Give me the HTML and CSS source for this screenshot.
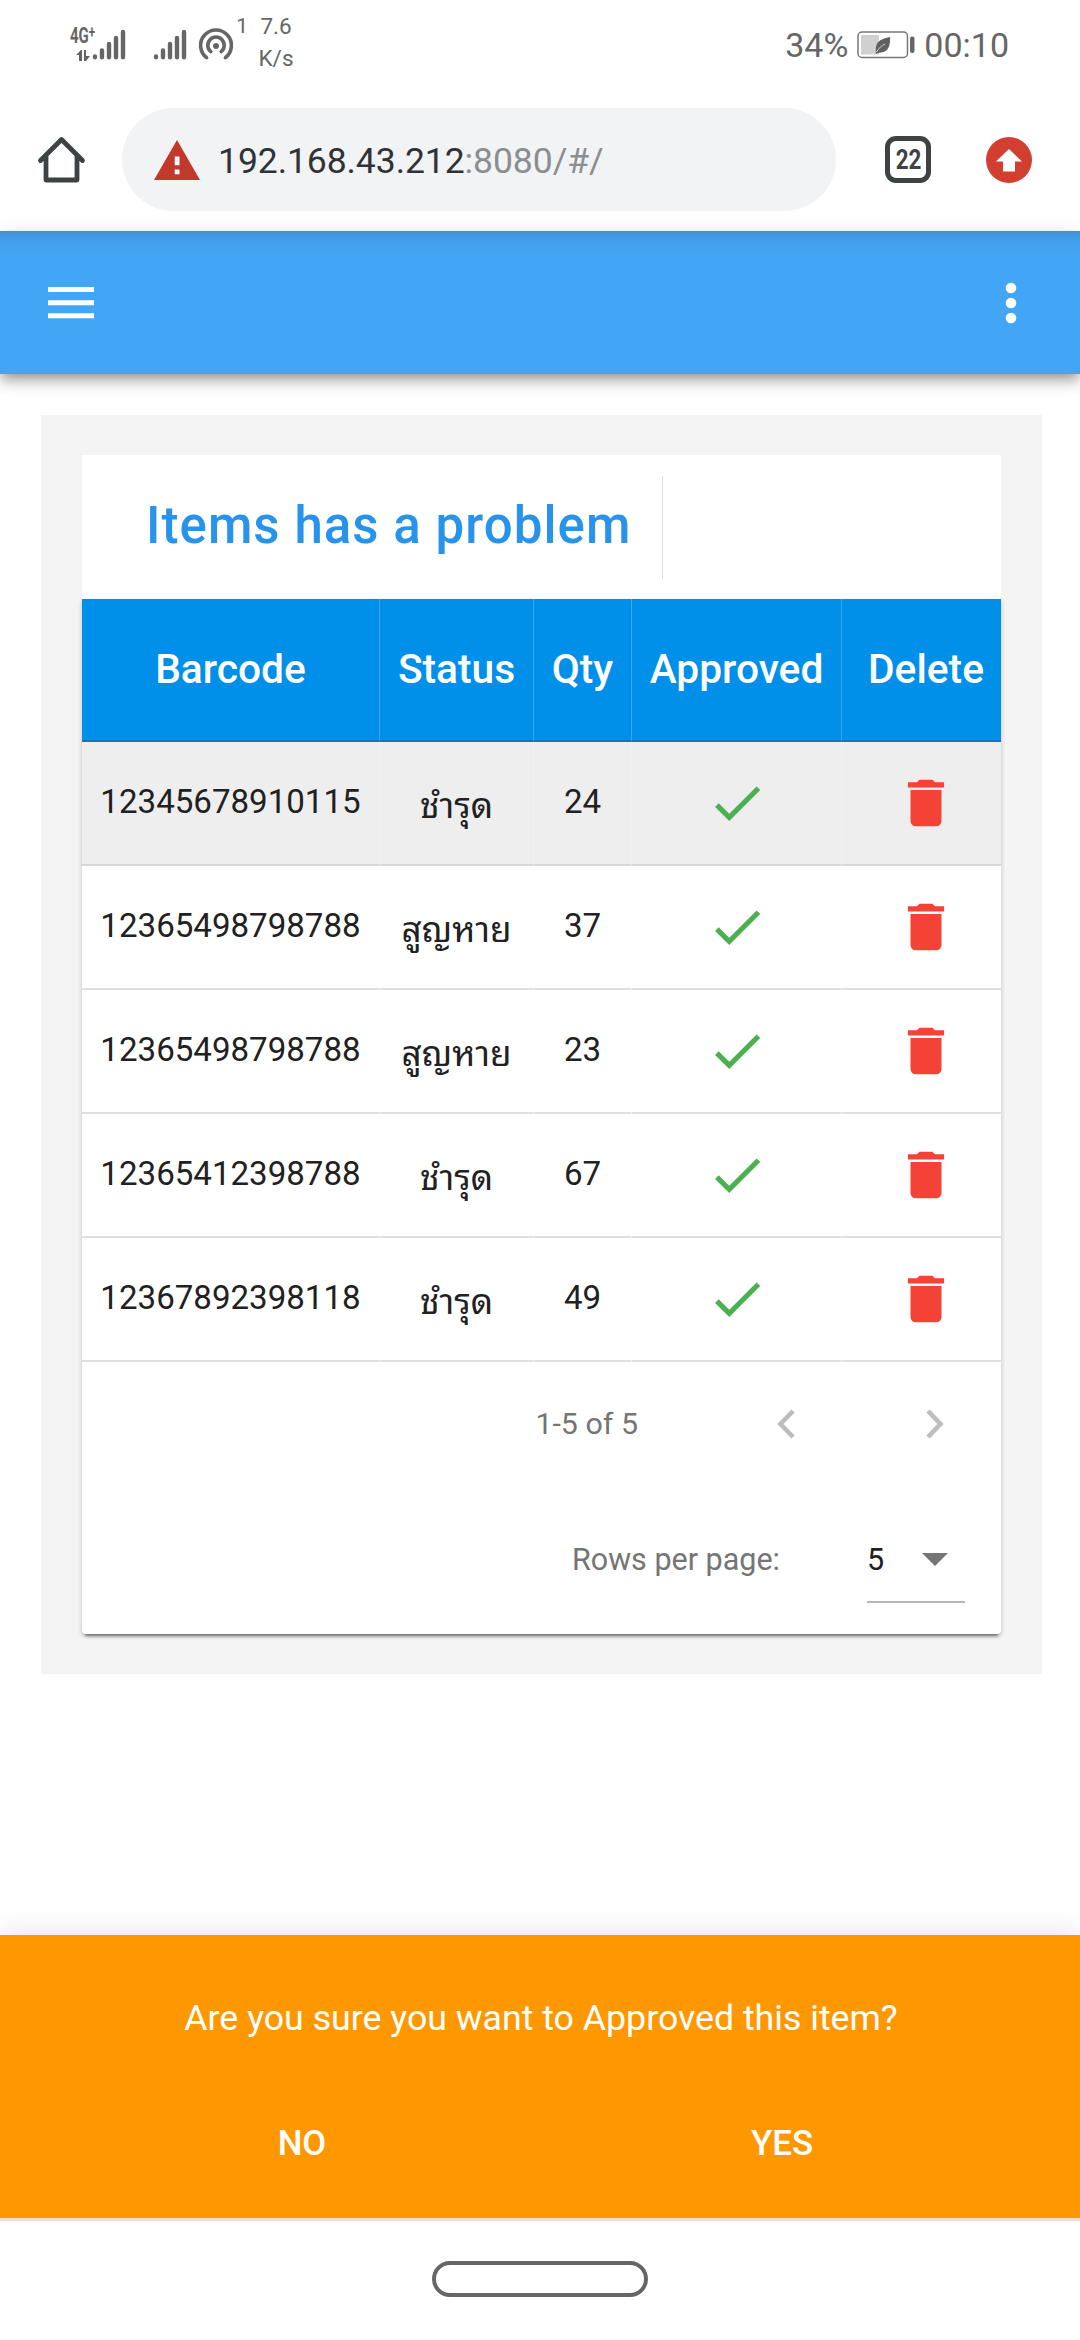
FILE: index.html
```html
<!DOCTYPE html>
<html lang="th">
<head>
<meta charset="utf-8">
<title>Items has a problem</title>
<link rel="stylesheet" href="styles.css">
</head>
<body>
<svg class="defs" aria-hidden="true">
  <symbol id="bars" viewBox="0 0 34 31">
    <g stroke="#666" stroke-width="4.4" stroke-linecap="round">
      <path d="M3 27.5v.8M10 21.5v6.8M17 15v13.3M24 9v19.3M31 3v25.3"/>
    </g>
  </symbol>
  <symbol id="check" viewBox="0 0 24 24"><path d="M21 7 9 19l-5.500-5.500 1.410-1.410L9 16.170 19.590 5.590z" fill="#4caf50"/></symbol>
  <symbol id="trash" viewBox="0 0 24 24"><path d="M19 4h-3.500l-1-1h-5l-1 1H5v2h14M6 19a2 2 0 0 0 2 2h8a2 2 0 0 0 2-2V7H6z" fill="#f44336"/></symbol>
</svg>

<div class="status">
  <div class="network">
    <span class="gen">4G<sup>+</sup></span>
    <svg class="traffic" viewBox="0 0 14 11"><path d="M0 5 5 0h1v11H3V5zM8 0h2v6h4l-4 5H8z" fill="#666"/></svg>
  </div>
  <svg class="bars"><use href="#bars"/></svg>
  <svg class="bars second"><use href="#bars"/></svg>
  <svg class="hotspot" viewBox="0 0 36 33" fill="none" stroke="#666" stroke-width="3.600" stroke-linecap="round">
    <path d="M8.600 29.600a15.400 15.400 0 1 1 18.800 0M12.800 23.600a8.200 8.200 0 1 1 10.400 0"/>
    <circle cx="18" cy="18" r="3" fill="#666" stroke="none"/>
  </svg>
  <span class="clients">1</span>
  <div class="speed"><span>7.6</span><span>K/s</span></div>
  <div class="power">
    <span class="percent">34%</span>
    <svg class="battery" viewBox="0 0 58 28">
      <rect x="1" y="1" width="49.500" height="25.500" rx="4" fill="none" stroke="#777" stroke-width="1.500"/>
      <rect x="4" y="4" width="18" height="19.500" fill="#d0d0d0"/>
      <rect x="53" y="5.500" width="4.500" height="16.500" rx="2" fill="#666"/>
      <path d="M33 6c.600 8-1.500 15-9 15.500-2.500.300-3.500.500-5 1.500C18 12 21 8.500 33 6z" fill="#606060"/>
      <path d="M19.500 21c2.500-4 5-6.500 8.500-8" stroke="#d6d6d6" stroke-width="1" fill="none"/>
    </svg>
    <span class="clock">00:10</span>
  </div>
</div>

<div class="browser">
  <svg class="home" viewBox="0 0 48 48" fill="none" stroke="#3f4245" stroke-width="4.800" stroke-linecap="round" stroke-linejoin="round"><path d="M3 24.500 24 3.500l21 21M8.500 20v24h31V20"/></svg>
  <div class="address">
    <svg class="warning" viewBox="0 0 46 40"><path d="M23 0 46 40H0z" fill="#c0392b"/><path d="M20.700 16.500h4.800v8.800h-4.800zM20.700 29.500h4.800v4.700h-4.800z" fill="#fff"/></svg>
    <span class="url">192.168.43.212<span class="path">:8080/#/</span></span>
  </div>
  <div class="tabs"><span>22</span></div>
  <svg class="update" viewBox="0 0 46 46"><circle cx="23" cy="23" r="23" fill="#d23f31"/><path d="M23 12 36 24.500h-7V34.500H17V24.500h-7z" fill="#fff"/></svg>
</div>

<header class="appbar">
  <svg class="menu" viewBox="0 0 46 32"><path d="M0 0h46v5H0zM0 13.200h46v5H0zM0 26.300h46v5H0z" fill="#fff"/></svg>
  <svg class="more" viewBox="0 0 12 42"><g fill="#fff"><circle cx="6" cy="6" r="5.300"/><circle cx="6" cy="21" r="5.300"/><circle cx="6" cy="36" r="5.300"/></g></svg>
</header>

<main class="panel">
  <div class="toolbar"><h1>Items has a problem</h1><i></i></div>
  <section class="card">
    <div class="scroll">
      <table>
        <colgroup><col class="c-code"><col class="c-status"><col class="c-qty"><col class="c-ok"><col class="c-del"></colgroup>
        <thead><tr><th>Barcode</th><th>Status</th><th>Qty</th><th>Approved</th><th>Delete</th></tr></thead>
        <tbody>
          <tr class="active"><td>12345678910115</td><td class="thai">ชำรุด</td><td>24</td><td><svg class="check"><use href="#check"/></svg></td><td><svg class="trash"><use href="#trash"/></svg></td></tr>
          <tr><td>12365498798788</td><td class="thai">สูญหาย</td><td>37</td><td><svg class="check"><use href="#check"/></svg></td><td><svg class="trash"><use href="#trash"/></svg></td></tr>
          <tr><td>12365498798788</td><td class="thai">สูญหาย</td><td>23</td><td><svg class="check"><use href="#check"/></svg></td><td><svg class="trash"><use href="#trash"/></svg></td></tr>
          <tr><td>12365412398788</td><td class="thai">ชำรุด</td><td>67</td><td><svg class="check"><use href="#check"/></svg></td><td><svg class="trash"><use href="#trash"/></svg></td></tr>
          <tr><td>12367892398118</td><td class="thai">ชำรุด</td><td>49</td><td><svg class="check"><use href="#check"/></svg></td><td><svg class="trash"><use href="#trash"/></svg></td></tr>
        </tbody>
      </table>
    </div>
    <div class="pager">
      <span>1-5 of 5</span>
      <svg class="chev prev" viewBox="0 0 18 30"><path d="M16 2 3.500 15 16 28" fill="none" stroke="#bdbdbd" stroke-width="4.600"/></svg>
      <svg class="chev" viewBox="0 0 18 30"><path d="m2 2 12.500 13L2 28" fill="none" stroke="#bdbdbd" stroke-width="4.600"/></svg>
    </div>
    <div class="perpage">
      <span>Rows per page:</span>
      <div class="select"><span>5</span><svg viewBox="0 0 26 13"><path d="M0 0h26L13 13z" fill="#757575"/></svg></div>
    </div>
  </section>
</main>

<div class="snackbar">
  <p>Are you sure you want to Approved this item?</p>
  <div class="actions"><button>NO</button><button>YES</button></div>
</div>
<nav class="system"><div class="pill"></div></nav>
</body>
</html>
```
FILE: styles.css
```css
* { box-sizing: border-box; }
html, body { margin: 0; padding: 0; }
body {
  width: 1080px;
  height: 2340px;
  overflow: hidden;
  display: flex;
  flex-direction: column;
  background: #fff;
  color: #212121;
  font-family: Roboto, "Noto Sans", sans-serif;
}
svg { display: block; flex: none; }
.defs { width: 0; height: 0; position: absolute; }

/* phone status bar */
.status {
  height: 108px;
  flex: none;
  display: flex;
  align-items: flex-start;
  padding: 0 71px 0 70px;
  color: #666;
}
.network { width: 22px; height: 62px; padding-top: 27px; }
.gen {
  display: block;
  width: 40px;
  height: 20px;
  font-size: 22px;
  line-height: 18px;
  font-weight: 700;
  transform: scaleX(.68);
  transform-origin: 0 0;
  white-space: nowrap;
}
.gen sup { font-size: 17px; line-height: 0; vertical-align: 5px; }
.traffic { width: 14px; height: 11px; margin: 3px 0 0 6px; }
.bars { width: 34px; height: 31px; margin-top: 29px; }
.bars.second { margin-left: 27px; }
.hotspot { width: 36px; height: 33px; margin: 28px 0 0 11px; }
.clients { width: 14px; margin: 14px 0 0 0; font-size: 21px; line-height: 24px; text-align: right; }
.speed {
  width: 40px;
  margin: 10px 0 0 8px;
  display: flex;
  flex-direction: column;
  align-items: center;
  font-size: 22.500px;
  line-height: 32px;
}
.power { margin-left: auto; display: flex; height: 90px; align-items: center; font-size: 34px; }
.battery { width: 58px; height: 28px; margin: 0 9px 0 9px; }

/* browser toolbar */
.browser { height: 123px; flex: none; display: flex; align-items: flex-start; padding-left: 37px; }
.home { width: 49px; height: 48px; margin-top: 28px; }
.address {
  width: 714px;
  height: 103px;
  margin-left: 36px;
  padding-left: 32px;
  border-radius: 52px;
  background: #f1f3f5;
  display: flex;
  align-items: center;
}
.warning { width: 46px; height: 40px; margin-right: 18px; }
.url { font-size: 35.500px; letter-spacing: -.07px; color: #303236; padding-top: 3px; }
.path { color: #8b8e91; }
.tabs {
  width: 46px;
  height: 47px;
  margin: 28px 0 0 49px;
  border: 5px solid #3f4245;
  border-radius: 11px;
  display: flex;
  align-items: center;
  justify-content: center;
  font-size: 27px;
  font-weight: 700;
  color: #3f4245;
}
.tabs span { transform: scaleX(.83); }
.update { width: 46px; height: 46px; margin: 29px 0 0 55px; }

/* application bar */
.appbar {
  height: 143px;
  flex: none;
  display: flex;
  align-items: center;
  justify-content: space-between;
  padding: 0 63px 0 48px;
  background: linear-gradient(#4191d7, #429fed 10px, #42a5f5 24px);
  box-shadow: 0 5px 10px -3px rgba(0, 0, 0, .3), 0 10px 13px rgba(0, 0, 0, .14), 0 3px 20px rgba(0, 0, 0, .1);
}
.menu { width: 46px; height: 32px; }
.more { width: 12px; height: 42px; }

/* problem list */
.panel {
  width: 1001px;
  height: 1259px;
  flex: none;
  margin: 41px 0 0 41px;
  padding: 40px 41px;
  background: #f4f4f4;
}
.toolbar { height: 144px; background: #fff; display: flex; align-items: flex-start; padding: 21px 0 0 64px; }
h1 {
  margin: 0;
  width: 516px;
  font-size: 51px;
  line-height: 99px;
  font-weight: 500;
  letter-spacing: 1.050px;
  color: #2793ea;
  white-space: nowrap;
}
.toolbar i { width: 1px; height: 103px; background: #e0e0e0; }
.card {
  width: 919px;
  height: 1035px;
  background: #fff;
  border-radius: 0 0 4px 4px;
  box-shadow: 0 5px 3px -3px rgba(0, 0, 0, .45), 0 2px 5px rgba(0, 0, 0, .22);
}
.scroll { width: 919px; overflow: hidden; }
table { width: 928px; table-layout: fixed; border-collapse: separate; border-spacing: 0; }
.c-code { width: 298px; }
.c-status { width: 154px; }
.c-qty { width: 98px; }
.c-ok { width: 210px; }
.c-del { width: 168px; }
th, td { padding: 0; text-align: center; white-space: nowrap; border-right: 1px solid rgba(255, 255, 255, .22); }
th:last-child, td:last-child { border-right: 0; }
th { height: 143px; padding-bottom: 2px; background: #0090ea; border-bottom: 2px solid #1276bd; color: #fff; font-size: 40.700px; font-weight: 500; }
td { height: 124px; border-bottom: 2px solid #e0e0e0; font-size: 33.100px; padding-bottom: 4px; }
td.thai {
  font-family: "Noto Sans Thai Looped", "Noto Looped Thai", "Droid Sans Thai", Loma, Garuda, Waree, "Tlwg Typo", "Noto Sans Thai", sans-serif;
  font-size: 35px;
  line-height: 50px;
  padding: 0 0 3px;
}
.active { background: #eee; }
.active td { border-bottom-color: #d8d8d8; }
.check, .trash { width: 62px; height: 62px; margin: 4px auto 0; }

.pager { height: 124px; display: flex; align-items: center; justify-content: flex-end; padding-right: 57px; font-size: 30.400px; color: #757575; }
.pager span { padding-bottom: 2px; }
.chev { width: 18px; height: 30px; }
.prev { margin: 0 131px 0 139px; }
.perpage { height: 148px; display: flex; padding: 22px 36px 0 0; justify-content: flex-end; font-size: 30.500px; color: #757575; }
.perpage > span { height: 104px; line-height: 104px; }
.select {
  width: 98px;
  height: 95px;
  margin-left: 87px;
  border-bottom: 2px solid #b8b8b8;
  display: flex;
  align-items: center;
  justify-content: space-between;
  padding: 10px 17px 0 0;
  color: #212121;
}
.select svg { width: 26px; height: 13px; }

/* confirmation */
.snackbar {
  height: 283px;
  flex: none;
  margin-top: auto;
  background: #ff9800;
  color: #fff;
  box-shadow: 0 -3px 26px rgba(0, 0, 0, .1);
  padding-top: 61px;
}
.snackbar p { margin: 0; padding-left: 2px; text-align: center; font-size: 35.700px; line-height: 44px; }
.actions { display: flex; padding-top: 81px; }
button {
  border: 0;
  padding: 0;
  background: none;
  color: inherit;
  font: 500 34.800px/44px Roboto, sans-serif;
  width: 480px;
}
button:first-child { padding-left: 62px; width: 542px; }
.system { height: 122px; flex: none; border-top: 3px solid #ecdfcd; background: #fff; display: flex; justify-content: center; padding-top: 40px; }
.pill { width: 216px; height: 36px; border: 4px solid #666; border-radius: 18px; }
```
